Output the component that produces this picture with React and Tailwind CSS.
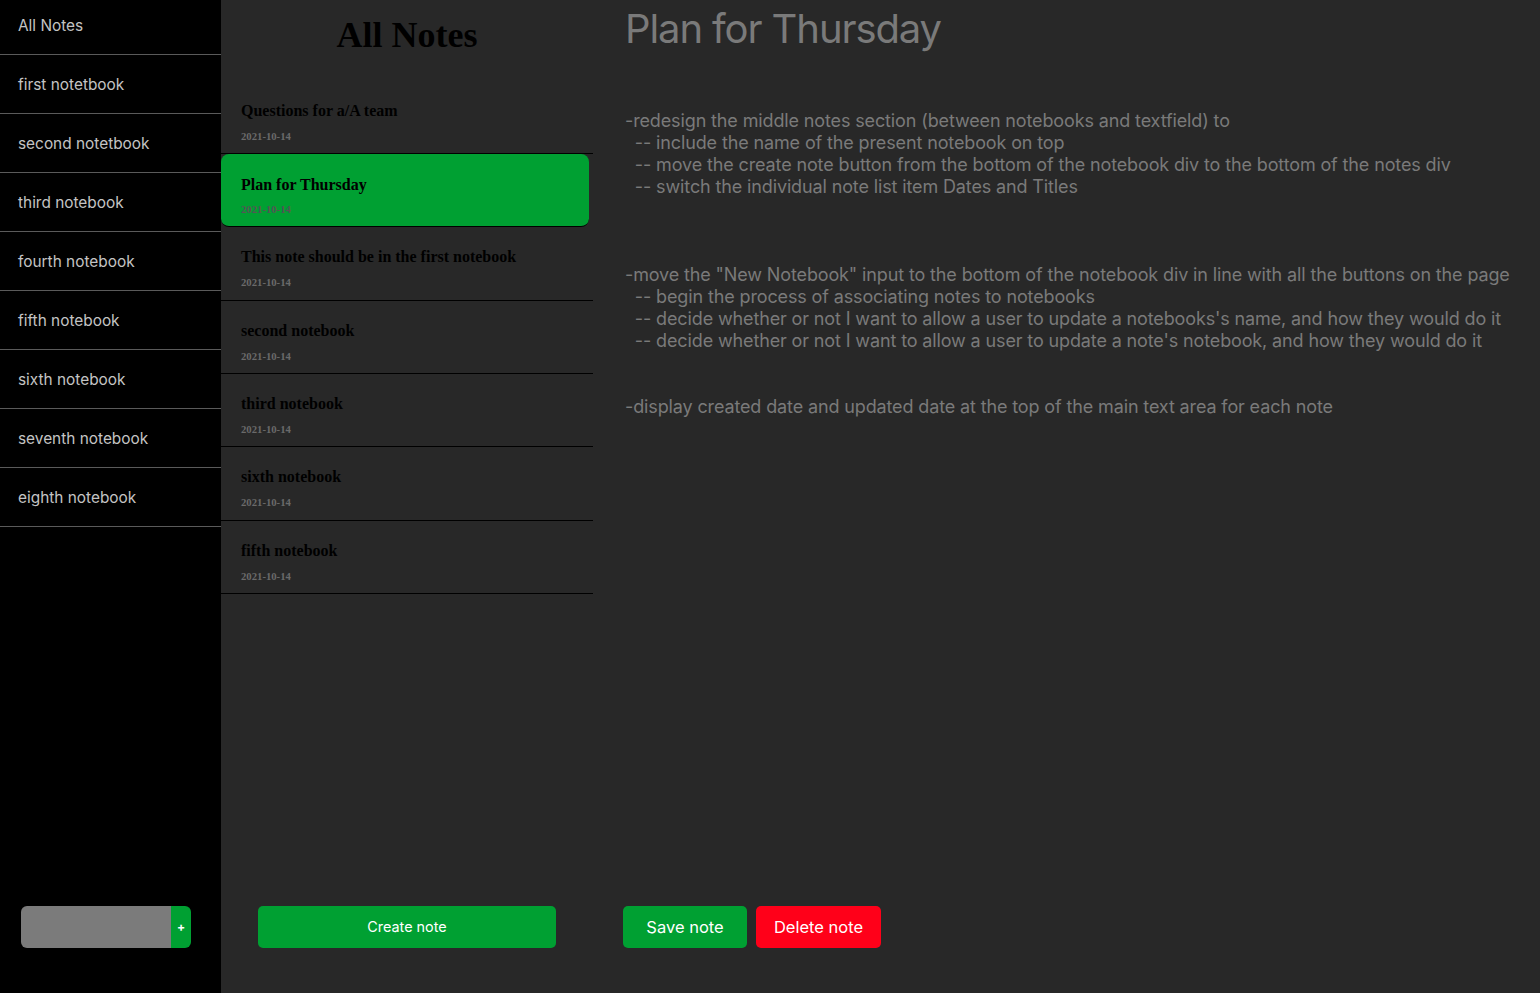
import React from "react";

const notebooks = [
  "All Notes",
  "first notetbook",
  "second notetbook",
  "third notebook",
  "fourth notebook",
  "fifth notebook",
  "sixth notebook",
  "seventh notebook",
  "eighth notebook",
];

const notes = [
  { title: "Questions for a/A team", date: "2021-10-14" },
  { title: "Plan for Thursday", date: "2021-10-14", active: true },
  { title: "This note should be in the first notebook", date: "2021-10-14" },
  { title: "second notebook", date: "2021-10-14" },
  { title: "third notebook", date: "2021-10-14" },
  { title: "sixth notebook", date: "2021-10-14" },
  { title: "fifth notebook", date: "2021-10-14" },
];

const body = `-redesign the middle notes section (between notebooks and textfield) to
  -- include the name of the present notebook on top
  -- move the create note button from the bottom of the notebook div to the bottom of the notes div
  -- switch the individual note list item Dates and Titles



-move the "New Notebook" input to the bottom of the notebook div in line with all the buttons on the page
  -- begin the process of associating notes to notebooks
  -- decide whether or not I want to allow a user to update a notebooks's name, and how they would do it
  -- decide whether or not I want to allow a user to update a note's notebook, and how they would do it


-display created date and updated date at the top of the main text area for each note`;

export default function App() {
  return (
    <div className="flex h-[993px] w-[1540px] overflow-hidden bg-[#282828]" style={{ fontFamily: "Inter, 'Liberation Sans', sans-serif" }}>
      {/* Sidebar */}
      <div className="flex w-[221px] shrink-0 flex-col justify-between bg-black">
        <div className="flex flex-col">
          {notebooks.map((n) => (
            <div key={n} className="flex h-[59px] items-center border-b border-[#5a5a5a] pl-[18px] pt-[2px] text-[15.4px] text-[#c4c4c4] first:h-[55px] first:pt-0 first:pb-[2px]">
              {n}
            </div>
          ))}
        </div>
        <div className="mb-[45px] ml-[21px] flex h-[42px]">
          <div className="w-[150px] rounded-l-[6px] bg-[#7b7b7b]" />
          <div className="flex w-[20px] items-center justify-center rounded-r-[6px] bg-[#00a032] text-[12px] font-bold text-white">+</div>
        </div>
      </div>

      {/* Middle notes column */}
      <div className="flex w-[372px] shrink-0 flex-col justify-between bg-[#282828]">
        <div className="flex flex-col">
          <div className="flex h-[80.67px] items-start justify-center pt-[11px]">
            <h1 className="text-[36px] font-bold leading-[48px] text-black" style={{ fontFamily: "'Liberation Serif', serif" }}>
              All Notes
            </h1>
          </div>
          {notes.map((n) => (
            <div
              key={n.title}
              className={
                n.active
                  ? "flex h-[73.33px] w-[368px] flex-col rounded-[8px] border-b border-black bg-[#00a032] pl-[20px] pt-[21px]"
                  : "flex h-[73.33px] flex-col border-b border-black pl-[20px] pt-[20px]"
              }
              style={{ fontFamily: "'Liberation Serif', serif" }}
            >
              <div className="text-[16px] font-bold leading-[20px] text-black">{n.title}</div>
              <div className={(n.active ? "mt-[8px] text-[#555] " : "mt-[9px] text-[#6a6a6a] ") + "text-[10.7px] font-bold leading-[12px]"}>{n.date}</div>
            </div>
          ))}
        </div>
        <div className="mb-[45px] ml-[37px]">
          <button className="h-[42px] w-[298px] rounded-[5px] bg-[#00a032] text-[14.4px] text-white">Create note</button>
        </div>
      </div>

      {/* Editor */}
      <div className="flex flex-1 flex-col justify-between pl-[32px] pr-[20px]">
        <div className="flex flex-col">
          <h2 className="mt-[4px] text-[40px] leading-[50px] tracking-[-1.1px] text-[#7a7a7a]">Plan for Thursday</h2>
          <div className="mt-[56px] whitespace-pre text-[18px] leading-[22px] tracking-[-0.13px] text-[#7a7a7a]">{body}</div>
        </div>
        <div className="mb-[45px] -ml-[2px] flex gap-[9px]">
          <button className="h-[42px] w-[124px] rounded-[5px] bg-[#00a032] text-[16.5px] text-white">Save note</button>
          <button className="h-[42px] w-[125px] rounded-[5px] bg-[#ff0019] text-[16.5px] text-white">Delete note</button>
        </div>
      </div>
    </div>
  );
}
